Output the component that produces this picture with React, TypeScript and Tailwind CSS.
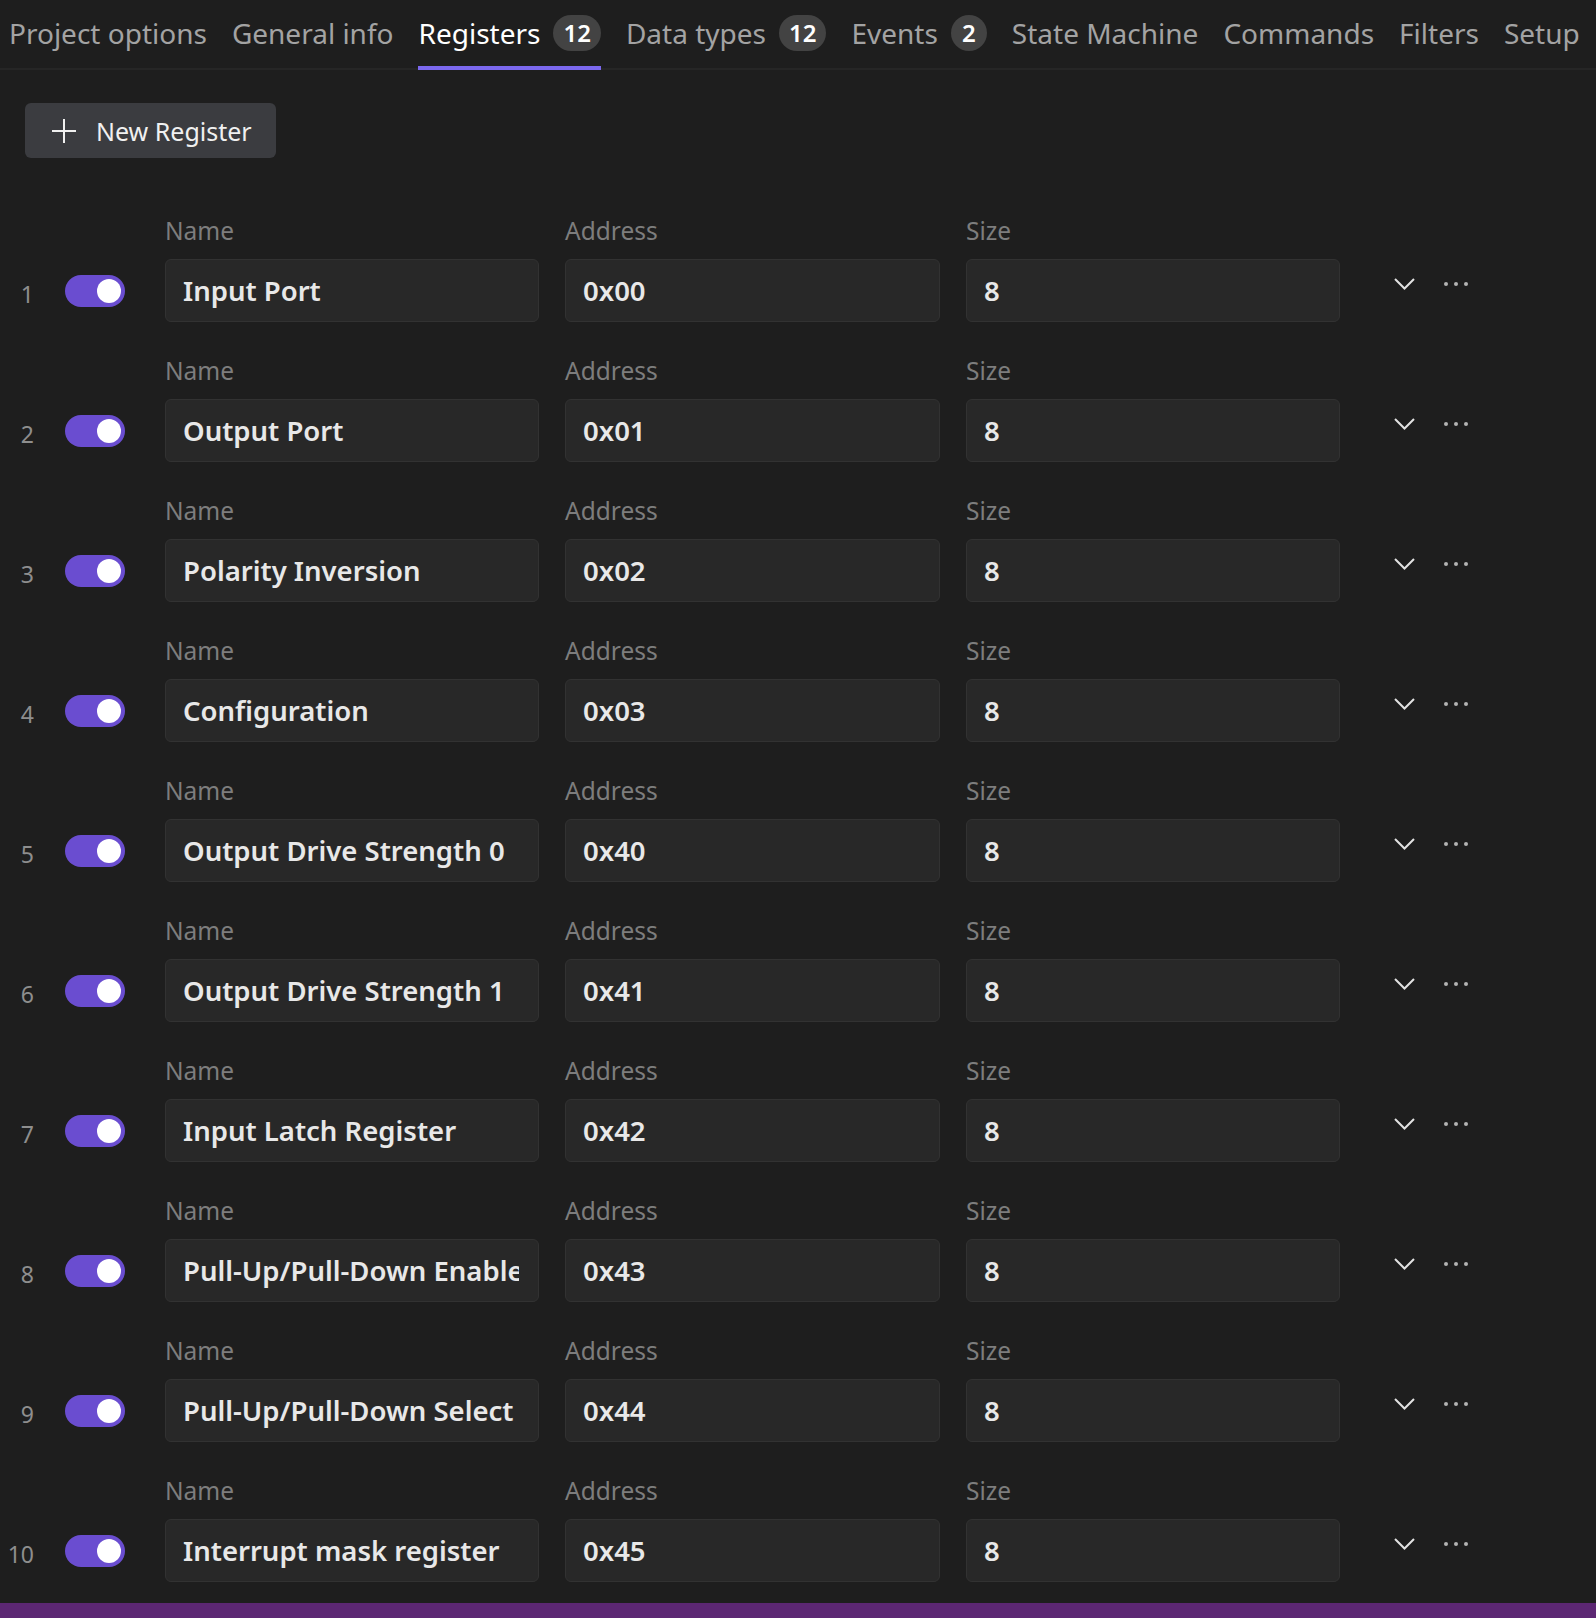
import { useState } from "react";

const tabs: { label: string; count?: number }[] = [
  { label: "Project options" },
  { label: "General info" },
  { label: "Registers", count: 12 },
  { label: "Data types", count: 12 },
  { label: "Events", count: 2 },
  { label: "State Machine" },
  { label: "Commands" },
  { label: "Filters" },
  { label: "Setup" }
];

const registers = [
  { name: "Input Port", address: "0x00", size: "8" },
  { name: "Output Port", address: "0x01", size: "8" },
  { name: "Polarity Inversion", address: "0x02", size: "8" },
  { name: "Configuration", address: "0x03", size: "8" },
  { name: "Output Drive Strength 0", address: "0x40", size: "8" },
  { name: "Output Drive Strength 1", address: "0x41", size: "8" },
  { name: "Input Latch Register", address: "0x42", size: "8" },
  { name: "Pull-Up/Pull-Down Enable", address: "0x43", size: "8" },
  { name: "Pull-Up/Pull-Down Select", address: "0x44", size: "8" },
  { name: "Interrupt mask register", address: "0x45", size: "8" }
];

function Toggle({ on }: { on: boolean }) {
  return (
    <button
      type="button"
      className={`relative h-[32px] w-[60px] shrink-0 rounded-full ${on ? "bg-[#6a4dd0]" : "bg-[#444]"}`}
    >
      <span className={`absolute top-[4px] h-[24px] w-[24px] rounded-full bg-white ${on ? "right-[4px]" : "left-[4px]"}`} />
    </button>
  );
}

function Field({ label, value, width }: { label: string; value: string; width: string }) {
  return (
    <div className={`flex shrink-0 flex-col ${width}`}>
      <span className="mb-[10px] h-[36px] text-[24.5px] leading-[36px] text-[#7d7d7d]">{label}</span>
      <input
        readOnly
        value={value}
        className="h-[63px] w-full rounded-[6px] border-[1.5px] border-[#323232] bg-[#282828] pl-[17px] pr-[19px] text-[27.5px] font-semibold text-[#e8e8e8] outline-none"
      />
    </div>
  );
}

export default function App() {
  const [active] = useState("Registers");

  return (
    <div className="flex min-h-[1618px] flex-col bg-[#1e1e1e] font-['Noto_Sans',sans-serif]">
      <nav className="flex h-[70px] items-stretch gap-[25px] border-b-2 border-[#262626] pl-[9px]">
        {tabs.map((tab) => (
          <div key={tab.label} className="relative flex items-center gap-[13px] pb-[2px]">
            <span className={`text-[28px] ${tab.label === active ? "text-white" : "text-[#a3a3a3]"}`}>{tab.label}</span>
            {tab.count ? (
              <span className="flex h-[36px] min-w-[36px] items-center justify-center rounded-full bg-[#434343] px-[10px] text-[24px] font-semibold text-white">
                {tab.count}
              </span>
            ) : null}
            {tab.label === active ? <span className="absolute inset-x-0 bottom-[-2px] h-[4px] bg-[#7b68ee]" /> : null}
          </div>
        ))}
      </nav>

      <div className="flex-1 pl-[25px]">
        <button
          type="button"
          className="mt-[33px] flex h-[55px] w-[251px] items-center gap-[19px] rounded-[6px] bg-[#3b3c40] pl-[26px] text-[25px] text-[#f0f0f0]"
        >
          <svg width="26" height="26" viewBox="0 0 26 26" fill="none" stroke="#f0f0f0" strokeWidth="2">
            <path d="M13 1v24M1 13h24" />
          </svg>
          <span className="pt-[3px]">New Register</span>
        </button>

        <div className="mt-[55px] flex flex-col gap-[31px]">
          {registers.map((reg, i) => (
            <div key={reg.address} className="-ml-[25px] flex items-end">
              <div className="flex h-[63px] w-[34px] shrink-0 items-center justify-end pt-[8px] text-[23px] text-[#8e8e8e]">
                {i + 1}
              </div>
              <div className="ml-[31px] flex h-[63px] items-center">
                <Toggle on />
              </div>
              <div className="ml-[40px] flex gap-[26px]">
                <Field label="Name" value={reg.name} width="w-[374px]" />
                <Field label="Address" value={reg.address} width="w-[375px]" />
                <Field label="Size" value={reg.size} width="w-[374px]" />
              </div>
              <div className="flex h-[63px] items-start pt-[19px]">
                <button type="button" className="ml-[54px] flex h-[12px] w-[21px] items-center justify-center">
                  <svg width="21" height="12" viewBox="0 0 21 12" fill="none" stroke="#e2e2e2" strokeWidth="2">
                    <path d="M1 1l9.5 9.5L20 1" />
                  </svg>
                </button>
                <button type="button" className="ml-[29px] flex h-[12px] items-center gap-[6px]">
                  <span className="h-[4px] w-[4px] rounded-full bg-[#b4b4b4]" />
                  <span className="h-[4px] w-[4px] rounded-full bg-[#b4b4b4]" />
                  <span className="h-[4px] w-[4px] rounded-full bg-[#b4b4b4]" />
                </button>
              </div>
            </div>
          ))}
        </div>
      </div>

      <div className="mt-[20px] h-[15px] bg-[#5c2773]" />
    </div>
  );
}
